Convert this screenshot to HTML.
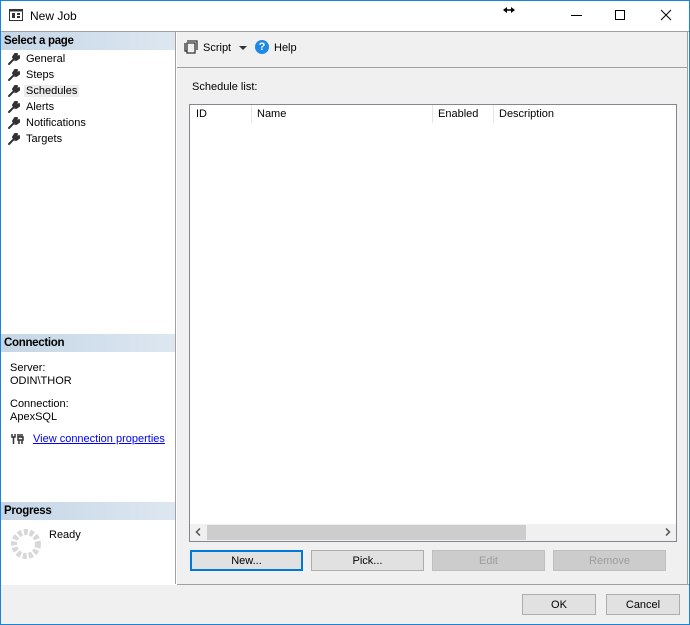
<!DOCTYPE html>
<html><head><style>
*{margin:0;padding:0;box-sizing:border-box}
body{width:690px;height:625px;overflow:hidden;background:#fff;font-family:"Liberation Sans",sans-serif;font-size:11px;color:#000;position:relative}
.a{position:absolute}
.hdr{position:absolute;left:1px;width:174px;height:18px;background:linear-gradient(to right,#c5d6e6,#dde7f1);font-weight:bold;font-size:11.5px;padding:3px 3px 0;letter-spacing:-0.3px}
.nav{position:absolute;left:8px;font-size:11px}
.nav div{height:16px;line-height:16px;position:relative;padding-left:18px}
.wr{position:absolute;left:0;top:2px}
.btn{position:absolute;top:550px;width:113px;height:21px;background:#e1e1e1;border:1px solid #adadad;text-align:center;line-height:20px;font-size:11px}
.dis{background:#cccccc;border-color:#bfbfbf;color:#9d9d9d}
.col{position:absolute;top:108px;font-size:11px}
.sep{position:absolute;top:105px;width:1px;height:18px;background:#e5e5e5}
</style></head><body>
<svg width="0" height="0" style="position:absolute"><defs><symbol id="w" viewBox="0 0 12 12"><path d="M1 11L6 6M6 6L5 4 7 1 9 1 8 3 9 4 11 3 11 5 8 7 6 6Z" fill="#333" stroke="#333" stroke-width="2" stroke-linecap="round" stroke-linejoin="round"/></symbol></defs></svg>
<div class="a" style="left:0;top:0;width:690px;height:625px;border:1px solid #1883d7"></div>
<svg class="a" style="left:9px;top:9px" width="14" height="12" viewBox="0 0 14 12"><rect x="0.5" y="0.5" width="13" height="11" fill="none" stroke="#333"/><rect x="0.5" y="0.5" width="13" height="2" fill="#333"/><rect x="3" y="4" width="3" height="5" fill="#333"/><rect x="8" y="4" width="3" height="2" fill="#333"/><rect x="8" y="7" width="3" height="2" fill="#333"/></svg>
<div class="a" style="left:30px;top:9px;font-size:12px">New Job</div>
<svg class="a" style="left:503px;top:6px" width="12" height="8"><path d="M3 4H9" stroke="#000" stroke-width="1.5"/><path d="M0 4L4 1V7Z M12 4L8 1V7Z" fill="#000"/></svg>
<div class="a" style="left:571px;top:15px;width:11px;height:1px;background:#000"></div>
<div class="a" style="left:615px;top:10px;width:10px;height:10px;border:1px solid #000"></div>
<svg class="a" style="left:660px;top:9px" width="12" height="12"><path d="M1 1L11 11M11 1L1 11" stroke="#000" stroke-width="1"/></svg>
<div class="a" style="left:1px;top:31px;width:688px;height:1px;background:#a0a0a0"></div>
<div class="a" style="left:175px;top:32px;width:2px;height:552px;background:#a0a0a0;border-right:1px solid #fff"></div>
<div class="hdr" style="top:32px">Select a page</div>
<div class="nav" style="top:51px">
<div><svg class="wr" width="12" height="12"><use href="#w"/></svg>General</div>
<div><svg class="wr" width="12" height="12"><use href="#w"/></svg>Steps</div>
<div><svg class="wr" width="12" height="12"><use href="#w"/></svg><span style="background:#ececec;padding:0 2px;margin-left:-2px">Schedules</span></div>
<div><svg class="wr" width="12" height="12"><use href="#w"/></svg>Alerts</div>
<div><svg class="wr" width="12" height="12"><use href="#w"/></svg>Notifications</div>
<div><svg class="wr" width="12" height="12"><use href="#w"/></svg>Targets</div>
</div>
<div class="hdr" style="top:334px">Connection</div>
<div class="a" style="left:10px;top:362px;line-height:13px">Server:<br>ODIN\THOR</div>
<div class="a" style="left:10px;top:398px;line-height:13px">Connection:<br>ApexSQL</div>
<svg class="a" style="left:11px;top:433px" width="14" height="12"><path d="M1 1V4H4V1M2.5 4V11M7 1V4M9 1V4M11 1V4M7 4H12V7H7ZM8 7V11M11 7V11" fill="none" stroke="#333" stroke-width="1.5"/></svg>
<div class="a" style="left:33px;top:433px;color:#0000ff;text-decoration:underline">View connection properties</div>
<div class="hdr" style="top:502px">Progress</div>
<svg class="a" style="left:10px;top:528px" width="32" height="32"><circle cx="16" cy="16" r="12" fill="none" stroke="#d8d8d8" stroke-width="6" stroke-dasharray="4 2"/></svg>
<div class="a" style="left:49px;top:529px">Ready</div>
<div class="a" style="left:177px;top:32px;width:510px;height:552px;background:#f0f0f0"></div>
<div class="a" style="left:687px;top:32px;width:2px;height:552px;background:#a0a0a0;border-right:1px solid #fff"></div>
<div class="a" style="left:177px;top:67px;width:510px;height:1px;background:#a0a0a0"></div>
<svg class="a" style="left:184px;top:40px" width="14" height="14"><path d="M3 1H13V10M1 3V11H3V13H11V3H3V11" fill="none" stroke="#333" stroke-width="1.3"/></svg>
<div class="a" style="left:203px;top:42px">Script</div>
<div class="a" style="left:239px;top:46px;width:0;height:0;border-left:4px solid transparent;border-right:4px solid transparent;border-top:4px solid #333"></div>
<div class="a" style="left:255px;top:40px;width:14px;height:14px;border-radius:50%;background:#1e88e5;color:#fff;font-weight:bold;font-size:11px;text-align:center;line-height:14px">?</div>
<div class="a" style="left:274px;top:42px">Help</div>
<div class="a" style="left:192px;top:81px">Schedule list:</div>
<div class="a" style="left:189px;top:104px;width:488px;height:438px;background:#fff;border:1px solid #828790"></div>
<div class="col" style="left:196px">ID</div>
<div class="sep" style="left:251px"></div>
<div class="col" style="left:257px">Name</div>
<div class="sep" style="left:432px"></div>
<div class="col" style="left:438px">Enabled</div>
<div class="sep" style="left:493px"></div>
<div class="col" style="left:499px">Description</div>
<div class="a" style="left:190px;top:524px;width:486px;height:17px;background:#f0f0f0"></div>
<div class="a" style="left:207px;top:525px;width:319px;height:15px;background:#cdcdcd"></div>
<svg class="a" style="left:195px;top:528px" width="6" height="8"><path d="M5 0.5L1.5 4 5 7.5" fill="none" stroke="#555" stroke-width="1.5"/></svg>
<svg class="a" style="left:665px;top:528px" width="6" height="8"><path d="M1 0.5L4.5 4 1 7.5" fill="none" stroke="#555" stroke-width="1.5"/></svg>
<div class="btn" style="left:190px;border:2px solid #0078d7;line-height:18px">New...</div>
<div class="btn" style="left:311px">Pick...</div>
<div class="btn dis" style="left:432px">Edit</div>
<div class="btn dis" style="left:553px">Remove</div>
<div class="a" style="left:177px;top:584px;width:512px;height:1px;background:#a0a0a0"></div>
<div class="a" style="left:1px;top:585px;width:688px;height:39px;background:#f0f0f0"></div>
<div class="btn" style="left:522px;top:594px;width:74px">OK</div>
<div class="btn" style="left:606px;top:594px;width:74px">Cancel</div>
</body></html>
